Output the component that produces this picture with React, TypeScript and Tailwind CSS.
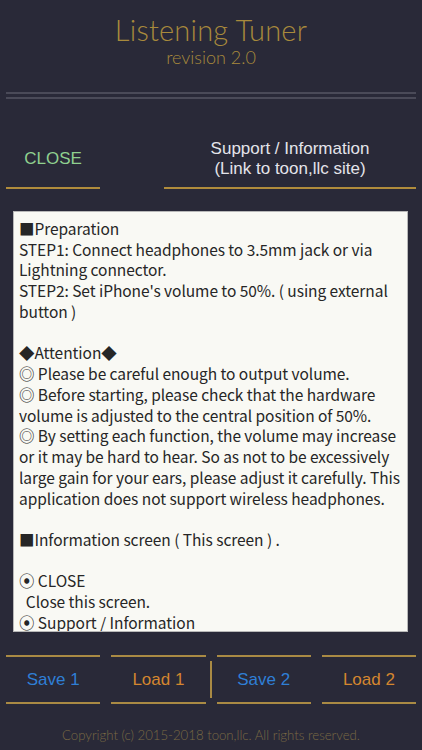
import React from 'react';

const lines: string[] = [
  '■Preparation',
  'STEP1: Connect headphones to 3.5mm jack or via',
  'Lightning connector.',
  "STEP2: Set iPhone's volume to 50%. ( using external",
  'button )',
  '',
  '◆Attention◆',
  '◎ Please be careful enough to output volume.',
  '◎ Before starting, please check that the hardware',
  'volume is adjusted to the central position of 50%.',
  '◎ By setting each function, the volume may increase',
  'or it may be hard to hear. So as not to be excessively',
  'large gain for your ears, please adjust it carefully. This',
  'application does not support wireless headphones.',
  '',
  '■Information screen ( This screen ) .',
  '',
  '⦿ CLOSE',
  '  Close this screen.',
  '⦿ Support / Information',
];

const buttons = [
  { label: 'Save 1', color: 'text-[#2f7fd6]' },
  { label: 'Load 1', color: 'text-[#d4862f]' },
  { label: 'Save 2', color: 'text-[#2f7fd6]' },
  { label: 'Load 2', color: 'text-[#d4862f]' },
];

export default function App() {
  return (
    <div className="w-[422px] h-[750px] bg-[#292938] overflow-hidden flex flex-col">
      {/* header */}
      <div className="pt-[12px] flex flex-col items-center text-[#a88a3c]" style={{ fontFamily: 'Lato, "Noto Sans", sans-serif' }}>
        <div className="text-[29px] leading-[36px] font-light tracking-[0.2px]">Listening Tuner</div>
        <div className="text-[18px] leading-[22px] font-light mt-[-2px]">revision 2.0</div>
      </div>
      <div className="mx-[6px] mt-[24px] h-[2px] bg-[#4a4a58]" />
      <div className="mx-[6px] mt-[3px] h-[2px] bg-[#4a4a58]" />

      {/* close / support */}
      <div className="flex justify-between px-[6px] mt-[31px]" style={{ fontFamily: '"Liberation Sans", Arial, sans-serif' }}>
        <div className="w-[94px] flex flex-col">
          <div className="h-[57px] flex items-center justify-center text-[17px] text-[#8fd08f]">CLOSE</div>
          <div className="h-[2px] bg-[#b08c3c]" />
        </div>
        <div className="w-[252px] flex flex-col">
          <div className="h-[57px] flex flex-col items-center justify-center text-[17px] leading-[20px] text-[#e4e4ea]">
            <div>Support / Information</div>
            <div>(Link to toon,llc site)</div>
          </div>
          <div className="h-[2px] bg-[#b08c3c]" />
        </div>
      </div>

      {/* info box */}
      <div className="ml-[13px] mr-[14px] mt-[22px] h-[421px] overflow-hidden bg-[#f9f9f4] border border-[#b8b8b8] px-[5px] pt-[6px] text-[15.5px] leading-[20.74px] tracking-[-0.05px] text-[#262626] whitespace-pre" style={{ fontFamily: '"Noto Sans CJK JP", "Noto Sans", sans-serif' }}>
        {lines.map((l, i) => (
          <div key={i} className="h-[20.74px]">{l}</div>
        ))}
      </div>

      {/* save / load */}
      <div className="relative grid grid-cols-4 gap-[11px] px-[6px] mt-[23px]" style={{ fontFamily: '"Liberation Sans", Arial, sans-serif' }}>
        {buttons.map((b) => (
          <div key={b.label} className="flex flex-col">
            <div className="h-[2px] bg-[#a98a44]" />
            <div className={`h-[45px] flex items-center justify-center text-[17px] ${b.color}`}>{b.label}</div>
            <div className="h-[2px] bg-[#a98a44]" />
          </div>
        ))}
        <div className="absolute left-[210px] top-[6px] w-[2px] h-[37px] bg-[#a98a44]" />
      </div>

      {/* footer */}
      <div className="mt-[22px] text-center text-[13.2px] font-light text-[#7a6a44]" style={{ fontFamily: 'Lato, "Noto Sans", sans-serif' }}>
        Copyright (c) 2015-2018 toon,llc. All rights reserved.
      </div>
    </div>
  );
}
